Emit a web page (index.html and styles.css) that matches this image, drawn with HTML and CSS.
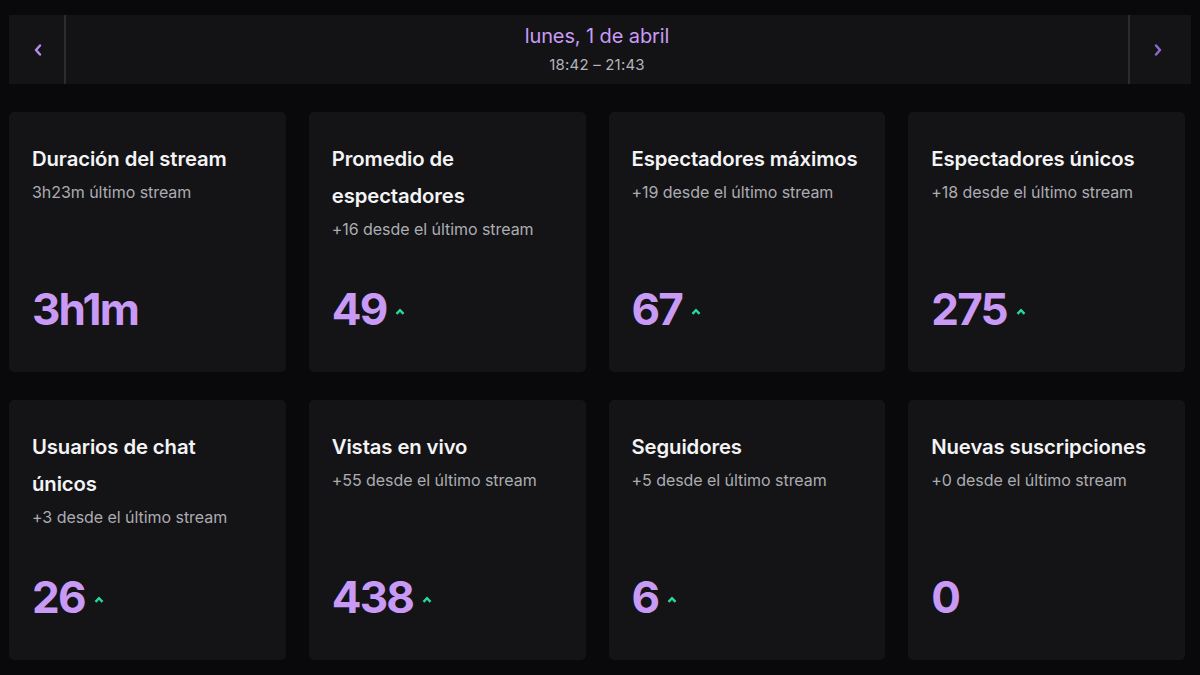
FILE: index.html
```html
<!DOCTYPE html>
<html lang="es">
<head>
    <meta charset="UTF-8">
    <meta name="viewport" content="width=device-width, initial-scale=1.0">
    <title>Resumen del stream</title>
    <link rel="stylesheet" href="styles.css">
</head>
<body>
    <!-- date switcher -->
    <header class="day-bar">
        <button class="nav-btn prev" type="button" aria-label="Anterior">
            <svg viewBox="0 0 8 12" width="8" height="12"><path d="M6 1.5L2 6l4 4.5" fill="none" stroke="currentColor" stroke-width="2.4" stroke-linecap="round" stroke-linejoin="round"/></svg>
        </button>
        <div class="day-info">
            <span class="day-date">lunes, 1 de abril</span>
            <span class="day-time">18:42 – 21:43</span>
        </div>
        <button class="nav-btn next" type="button" aria-label="Siguiente">
            <svg viewBox="0 0 8 12" width="8" height="12"><path d="M2 1.5L6 6l-4 4.5" fill="none" stroke="currentColor" stroke-width="2.4" stroke-linecap="round" stroke-linejoin="round"/></svg>
        </button>
    </header>

    <!-- stats grid -->
    <main class="stats">
        <div class="card">
            <h2>Duración del stream</h2>
            <p class="sub">3h23m último stream</p>
            <div class="value">3h1m</div>
        </div>
        <div class="card">
            <h2>Promedio de espectadores</h2>
            <p class="sub">+16 desde el último stream</p>
            <div class="value">49 <svg class="up" viewBox="0 0 10 7" width="10" height="7"><path d="M1.5 5.8L5 2.2l3.5 3.6" fill="none" stroke="currentColor" stroke-width="2.4"/></svg></div>
        </div>
        <div class="card">
            <h2>Espectadores máximos</h2>
            <p class="sub">+19 desde el último stream</p>
            <div class="value">67 <svg class="up" viewBox="0 0 10 7" width="10" height="7"><path d="M1.5 5.8L5 2.2l3.5 3.6" fill="none" stroke="currentColor" stroke-width="2.4"/></svg></div>
        </div>
        <div class="card">
            <h2>Espectadores únicos</h2>
            <p class="sub">+18 desde el último stream</p>
            <div class="value">275 <svg class="up" viewBox="0 0 10 7" width="10" height="7"><path d="M1.5 5.8L5 2.2l3.5 3.6" fill="none" stroke="currentColor" stroke-width="2.4"/></svg></div>
        </div>
        <div class="card">
            <h2>Usuarios de chat únicos</h2>
            <p class="sub">+3 desde el último stream</p>
            <div class="value">26 <svg class="up" viewBox="0 0 10 7" width="10" height="7"><path d="M1.5 5.8L5 2.2l3.5 3.6" fill="none" stroke="currentColor" stroke-width="2.4"/></svg></div>
        </div>
        <div class="card">
            <h2>Vistas en vivo</h2>
            <p class="sub">+55 desde el último stream</p>
            <div class="value">438 <svg class="up" viewBox="0 0 10 7" width="10" height="7"><path d="M1.5 5.8L5 2.2l3.5 3.6" fill="none" stroke="currentColor" stroke-width="2.4"/></svg></div>
        </div>
        <div class="card">
            <h2>Seguidores</h2>
            <p class="sub">+5 desde el último stream</p>
            <div class="value">6 <svg class="up" viewBox="0 0 10 7" width="10" height="7"><path d="M1.5 5.8L5 2.2l3.5 3.6" fill="none" stroke="currentColor" stroke-width="2.4"/></svg></div>
        </div>
        <div class="card">
            <h2>Nuevas suscripciones</h2>
            <p class="sub">+0 desde el último stream</p>
            <div class="value">0</div>
        </div>
    </main>
</body>
</html>
```

FILE: styles.css
```css
body {
    font-family: Inter, "Noto Sans", sans-serif;
    margin: 0;
    padding: 15px 9px 0 9px;
    background-color: #09090b;
    color: #efeff1;
}

.day-bar {
    display: flex;
    height: 69px;
    background-color: #131316;
}

.nav-btn {
    width: 57px;
    border: none;
    background-color: #141417;
    color: #b58cf0;
    display: flex;
    align-items: center;
    justify-content: center;
    padding: 0;
}

.nav-btn.prev {
    border-right: 2px solid #2b2b30;
    padding-left: 2px;
}

.nav-btn.next {
    border-left: 2px solid #2b2b30;
    width: 63px;
    color: #8f6dd0;
    padding-right: 5px;
}

.day-info {
    flex: 1;
    display: flex;
    flex-direction: column;
    align-items: center;
    padding-top: 9px;
}

.day-date {
    font-size: 20px;
    color: #c99bf5;
    line-height: 24px;
    letter-spacing: -0.1px;
}

.day-time {
    font-size: 15px;
    color: #b4b4ba;
    margin-top: 7px;
    letter-spacing: 0.2px;
}

.stats {
    display: grid;
    grid-template-columns: repeat(4, 1fr);
    grid-auto-rows: 260px;
    column-gap: 23px;
    row-gap: 28px;
    margin: 28px 6px 0 0;
}

.card {
    background-color: #141417;
    border-radius: 5px;
    padding: 28px 24px 0 23px;
    display: flex;
    flex-direction: column;
}

.card h2 {
    margin: 0;
    font-size: 20.3px;
    font-weight: 600;
    line-height: 37px;
    color: #f4f4f6;
    letter-spacing: -0.1px;
}

.card .sub {
    margin: 5px 0 0 0;
    font-size: 16px;
    color: #acacb2;
    line-height: 20px;
    letter-spacing: -0.05px;
}

.card .value {
    margin-top: auto;
    margin-bottom: 38px;
    font-size: 44px;
    font-weight: 700;
    color: #c99af5;
    line-height: 50px;
    letter-spacing: -1.8px;
    display: flex;
    align-items: center;
}

.card .value .up {
    color: #22dc98;
    margin-left: 9px;
    margin-top: 5px;
}
```
